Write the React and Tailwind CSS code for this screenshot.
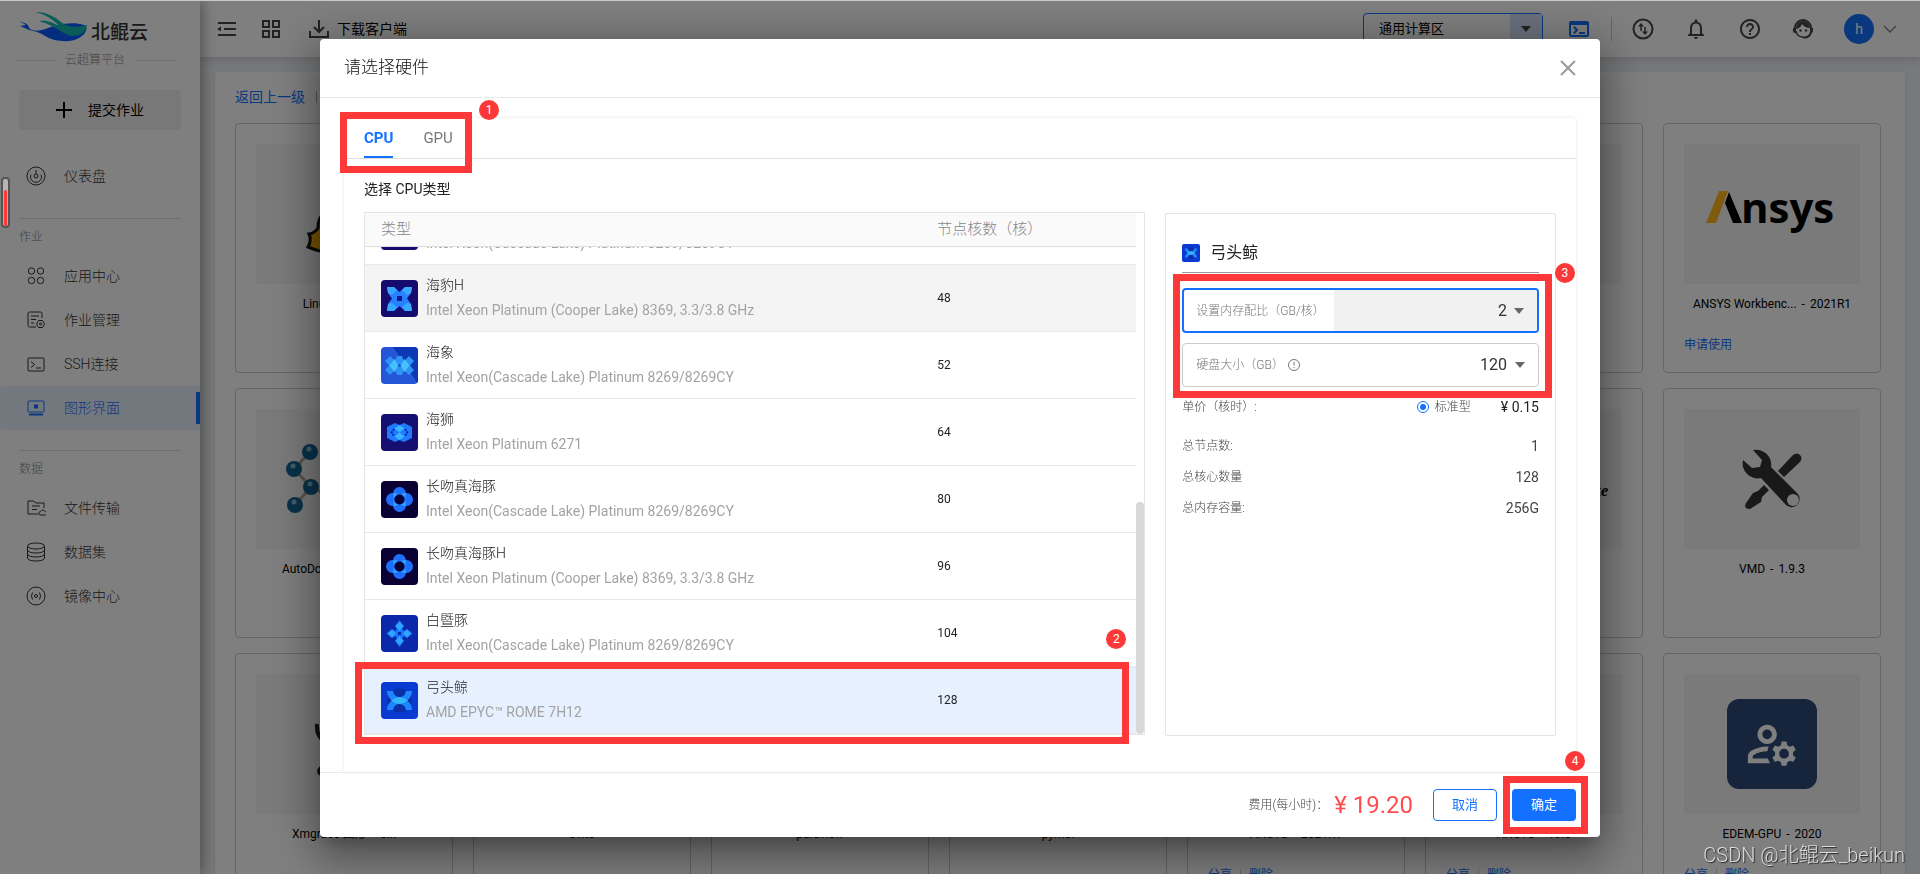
import { useEffect, useRef, useState } from "react";
import {
    MdHelpOutline,
    MdNotificationsNone,
    MdOutlineGridView,
    MdOutlineManageAccounts,
    MdOutlineTerminal,
} from "react-icons/md";

// 节点图标，按 kind 绘制不同图案
function NodeIcon({ kind, className }) {
    const shapes = {
        seal: (
            <>
                <rect width="37" height="37" fill="#150a6e" />
                <path d="M6 7h7l5.500 5L24 7h7l-1 6-4 5.500 4 5.500 1 7h-7l-5.500-5-5.500 5H6l1-7 4-5.500L7 13z" fill="#2680ff" />
                <path d="M6 7h7l3 3-5 5-4-2zM31 7h-7l-3 3 5 5 4-2zM6 31h7l3-4-5-4-4 1zM31 31h-7l-3-4 5-4 4 1z" fill="#38a8ff" />
                <rect x="16" y="16" width="5" height="5" fill="#101a8c" />
            </>
        ),
        walrus: (
            <>
                <rect width="37" height="37" fill="#2456d8" />
                <path d="M37 0v37L12 0z" fill="#0d38b4" />
                <path d="M4 14l5-5 5 5 2-5h5l2 5 5-5 5 5-4 4.500 4 4.500-5 5-5-5-2 5h-5l-2-5-5 5-5-5 4-4.500z" fill="#2f93f5" />
                <path d="M13.500 12l4 6.500-4 6.500-5-6.500zM23.500 12l5 6.500-5 6.500-4-6.500z" fill="#43c2ff" />
                <circle cx="18.500" cy="18.500" r="1.500" fill="#1755cf" />
            </>
        ),
        lion: (
            <>
                <rect width="37" height="37" fill="#140f70" />
                <path d="M6 13l8-4 4.500 2L23 9l8 4v11l-8 4-4.500-2-4.500 2-8-4z" fill="#1f7aff" />
                <path d="M18.500 11l5 3.500-5 4-5-4zM18.500 18.500l5 4-5 3.500-5-3.500z" fill="#38b6ff" />
                <path d="M13 15l-2.500 3.500L13 22M24 15l2.500 3.500L24 22" fill="none" stroke="#140f70" strokeWidth="1.500" strokeDasharray="2 1" />
            </>
        ),
        dolphin: (
            <>
                <rect width="37" height="37" fill="#0a0033" />
                <g fill="#1f6fff">
                    <circle cx="18.500" cy="12.500" r="6.500" />
                    <circle cx="18.500" cy="24.500" r="6.500" />
                    <circle cx="11.500" cy="18.500" r="6.500" />
                    <circle cx="25.500" cy="18.500" r="6.500" />
                </g>
                <path d="M12 12.500q3-1.500 5 1.500-4 0-4 4.500zM25 12.500q-3-1.500-5 1.500 4 0 4 4.500zM12 24.500q3 1.500 5-1.500-4 0-4-4.500zM25 24.500q-3 1.500-5-1.500 4 0 4-4.500z" fill="#2fa4ff" />
                <circle cx="18.500" cy="18.500" r="5" fill="#0a0033" />
            </>
        ),
        baiji: (
            <>
                <rect width="37" height="37" fill="#0b28a8" />
                <path d="M18.500 5l4.500 6-2 3 2 2 3-2 5.500 4.500-5.500 4.500-3-2-2 2 2 3-4.500 6-4.500-6 2-3-2-2-3 2L5.500 18.500 11 14l3 2 2-2-2-3z" fill="#1a74ff" />
                <path d="M18.500 7l4 4-4 5-4-5zM18.500 21l4 5-4 4-4-4zM7 18.500l4-4 4 4-4 4zM22 18.500l4-4 4 4-4 4z" fill="#2da6ff" />
                <rect x="17" y="17" width="3" height="3" fill="#0b28a8" />
            </>
        ),
        whale: (
            <>
                <rect width="37" height="37" fill="#0a3ad2" />
                <circle cx="18.500" cy="18.500" r="12" fill="#0b2fa6" />
                <path d="M6 9h6q1 6 6.500 6T25 9h6q0 6-5 9.500 5 3.500 5 9.500h-6q-1-6-6.500-6T12 28H6q0-6 5-9.500Q6 15 6 9z" fill="#1f86ff" />
                <path d="M10 18.500q8.500-7 17 0-8.500 7-17 0z" fill="#2fb8ff" />
            </>
        ),
    };

    return (
        <svg viewBox="0 0 37 37" className={className} aria-hidden="true">
            {shapes[kind]}
        </svg>
    );
}

// 侧边栏图标
const menuIcons = {
    dashboard: (
        <>
            <circle cx="10" cy="10" r="9" />
            <path d="M10 4v4M5 8.500a5.500 5.500 0 1 0 10 0" />
            <circle cx="10" cy="10" r="2" />
        </>
    ),
    apps: (
        <>
            <circle cx="5.500" cy="5" r="3.200" />
            <circle cx="14.500" cy="5" r="3.200" />
            <circle cx="5.500" cy="14.500" r="3.200" />
            <circle cx="14.500" cy="14.500" r="3.200" />
        </>
    ),
    jobs: (
        <>
            <path d="M10 17H3.500A1.500 1.500 0 0 1 2 15.500v-12A1.500 1.500 0 0 1 3.500 2h11A1.500 1.500 0 0 1 16 3.500V8M5 6h8M5 9.500h5M5 13h3" />
            <path d="M12.500 10.500h4l2 3.500-2 3.500h-4l-2-3.500z" />
            <circle cx="14.500" cy="14" r="1" />
        </>
    ),
    ssh: (
        <>
            <rect x="2" y="4" width="16" height="13" rx="1" />
            <path d="M5 7.500l3.500 3L5 13.500M10 14h5" />
        </>
    ),
    desktop: (
        <>
            <rect x="2" y="3" width="16" height="11" rx="1" />
            <rect x="8.500" y="7" width="3" height="3" fill="currentColor" />
            <path d="M3 16.500h14" strokeWidth="2" />
        </>
    ),
    transfer: (
        <>
            <path d="M12 16H2V3h6l1.500 2H18v5M6 8h8M6 11.500h5" />
            <path d="M14 17h5.500a1.800 1.800 0 0 0-.5-3.500 2.500 2.500 0 0 0-4.500 0A1.800 1.800 0 0 0 14 17z" />
        </>
    ),
    dataset: (
        <>
            <ellipse cx="10" cy="4" rx="8.500" ry="3" />
            <path d="M1.500 4v12c0 4 17 4 17 0V4M1.500 8c0 4 17 4 17 0M1.500 12c0 4 17 4 17 0" />
        </>
    ),
    mirror: (
        <>
            <circle cx="10" cy="10" r="9" />
            <circle cx="10" cy="10" r="1.500" />
            <path d="M6.500 6.500q-2 3.500 0 7M13.500 6.500q2 3.500 0 7" />
        </>
    ),
};

function MenuItem({ icon, label, active }) {
    return (
        <a
            href="#"
            className={
                active
                    ? "flex h-11 items-center gap-[18px] rounded-l bg-[#e6f0fc] pl-[26px] text-sm text-[#1470ff]"
                    : "flex h-11 items-center gap-[18px] pl-[26px] text-sm text-[#333]"
            }
        >
            <svg viewBox="0 0 20 20" className="size-5 shrink-0" fill="none" stroke="currentColor" strokeWidth="1">
                {menuIcons[icon]}
            </svg>
            <span className="flex-1 font-light">{label}</span>
            {active && <span className="h-8 w-1 bg-[#1470ff]" />}
        </a>
    );
}

function MenuTitle({ children }) {
    return (
        <h3 className="mx-[19px] mt-5 flex h-9 items-center border-t border-[#dcdcdc] text-xs font-light text-[#888]">
            {children}
        </h3>
    );
}

function Sidebar() {
    return (
        <aside className="z-20 w-[200px] shrink-0 bg-white shadow-[2px_0_14px_rgba(0,0,0,0.4)]">
            <div className="flex h-[46px] items-end gap-1 pb-1 pl-[19px]">
                <svg viewBox="0 0 68 30" className="h-[30px] w-[68px]" aria-hidden="true">
                    <path d="M0 9l8 3 3 5c8 4 14 0 24-3s22-4 30-1c5 2 2 9-5 13-9 5-24 4-34-2C17 18 11 19 8 17L1 14l6-1z" fill="#0a5bff" />
                    <path d="M16 0c12 0 20 5 26 10s14 6 26 3c-1 8-8 11-15 11-9-1-13-9-33-15 9-1 14 2 20 5C35 8 28 3 16 0z" fill="#12b8b0" />
                </svg>
                <span className="text-[19px] leading-[18px] font-medium text-[#333]">北鲲云</span>
            </div>
            <div className="mx-[15px] mt-[5px] flex h-[18px] w-40 items-center gap-2.5 text-xs font-light text-[#888]">
                <span className="h-px flex-1 bg-[#e0e0e0]" />
                云超算平台
                <span className="h-px flex-1 bg-[#e0e0e0]" />
            </div>
            <button
                type="button"
                className="mx-[19px] mt-[21px] mb-6 flex h-10 w-[162px] items-center justify-center gap-4 rounded bg-[#f0f0f0] text-sm text-black"
            >
                <svg viewBox="0 0 16 16" className="size-4" stroke="currentColor" strokeWidth="2">
                    <path d="M8 0v16M0 8h16" />
                </svg>
                提交作业
            </button>
            <nav>
                <MenuItem icon="dashboard" label="仪表盘" />
                <MenuTitle>作业</MenuTitle>
                <MenuItem icon="apps" label="应用中心" />
                <MenuItem icon="jobs" label="作业管理" />
                <MenuItem icon="ssh" label="SSH连接" />
                <MenuItem icon="desktop" label="图形界面" active />
                <MenuTitle>数据</MenuTitle>
                <MenuItem icon="transfer" label="文件传输" />
                <MenuItem icon="dataset" label="数据集" />
                <MenuItem icon="mirror" label="镜像中心" />
            </nav>
        </aside>
    );
}

function Header() {
    return (
        <header className="z-10 flex h-[57px] shrink-0 items-center bg-white pr-6 pl-[17px] text-[#444] shadow-[0_2px_10px_rgba(0,0,0,0.15)]">
            <button type="button" aria-label="收起菜单">
                <svg viewBox="0 0 20 16" className="h-4 w-5" fill="none" stroke="currentColor" strokeWidth="2">
                    <path d="M1 2h18M7 8h12M1 14h18" />
                    <path d="M0 8l4-2.500v5z" fill="currentColor" stroke="none" />
                </svg>
            </button>
            <button type="button" aria-label="应用" className="ml-[22px]">
                <MdOutlineGridView size={24} />
            </button>
            <a href="#" className="ml-[26px] flex items-center gap-2 text-sm text-black">
                <svg viewBox="0 0 20 18" className="h-[18px] w-5" fill="none" stroke="#444" strokeWidth="2">
                    <path d="M1 11v6h18v-6M10 0v11M5 7l5 5 5-5" />
                </svg>
                下载客户端
            </a>
            <div className="relative ml-auto">
                <select
                    aria-label="计算区"
                    className="h-8 w-[180px] appearance-none rounded border border-[#1470ff] bg-white pl-[15px] text-[13px] text-black"
                >
                    <option>通用计算区</option>
                </select>
                <span className="pointer-events-none absolute inset-y-px right-px flex w-8 items-center justify-center bg-[#d5e3fa]">
                    <svg viewBox="0 0 10 6" className="h-1.5 w-2.5" fill="#444">
                        <path d="M0 0h10L5 6z" />
                    </svg>
                </span>
            </div>
            <button type="button" aria-label="终端" className="ml-6 border-r border-[#ccc] pr-5 text-[#1470ff]">
                <MdOutlineTerminal size={24} />
            </button>
            <button type="button" aria-label="流量" className="ml-5">
                <svg viewBox="0 0 22 22" className="size-[22px]" fill="none" stroke="currentColor" strokeWidth="2">
                    <circle cx="11" cy="11" r="9.500" />
                    <path d="M9 13V7M13 9v6" strokeWidth="1.500" />
                    <path d="M6 8.500L9 5l3 3.500zM10 13.500l3 3.500 3-3.500z" fill="currentColor" stroke="none" />
                </svg>
            </button>
            <button type="button" aria-label="通知" className="ml-[30px]">
                <MdNotificationsNone size={24} />
            </button>
            <button type="button" aria-label="帮助" className="ml-[30px]">
                <MdHelpOutline size={24} />
            </button>
            <button type="button" aria-label="客服" className="ml-[30px]">
                <svg viewBox="0 0 22 22" className="size-[22px]" fill="none" stroke="currentColor" strokeWidth="2">
                    <path d="M3 10a8 8 0 0 1 16 0v4q-1 5-6 5.500h-2" />
                    <path d="M4 13q1 6 7 6" strokeWidth="1.500" />
                    <path d="M4 11q5-1 6-5 3 4 8 4-1-7-7-7t-7 8zM1 10h3v5H3q-2 0-2-2zM18 10h3v3q0 2-2 2h-1z" fill="currentColor" stroke="none" />
                    <circle cx="8.500" cy="12.500" r="1.200" fill="currentColor" stroke="none" />
                    <circle cx="14" cy="12.500" r="1.200" fill="currentColor" stroke="none" />
                </svg>
            </button>
            <button type="button" className="ml-[30px] flex items-center gap-2.5">
                <span className="flex size-[30px] items-center justify-center rounded-full bg-[#1470ff] text-sm text-white">h</span>
                <svg viewBox="0 0 12 8" className="h-2 w-3" fill="none" stroke="#888" strokeWidth="1.500">
                    <path d="M0 1l6 6 6-6" />
                </svg>
            </button>
        </header>
    );
}

// 应用卡片上的图片
const artwork = {
    linux: (
        <>
            <path d="M72 20q16-14 32 0l6 40q16 30 4 50H70q-8-20 0-48z" fill="#222" />
            <path d="M66 72q-4 2-4 12-3 5-9 6 3 6-1 13 12 5 24 6 4-16-10-37z" fill="#f0a800" stroke="#111" strokeWidth="3" />
        </>
    ),
    autodock: (
        <>
            <path d="M54 43L38 60l17 18-16 18M55 78l20 10" fill="none" stroke="#b5a595" strokeWidth="3" />
            <circle cx="54" cy="43" r="8" fill="#0f6592" />
            <circle cx="38" cy="60" r="8" fill="#0f6592" />
            <circle cx="55" cy="78" r="8" fill="#0f6592" />
            <circle cx="39" cy="96" r="8" fill="#0f6592" />
            <g fill="#8fb9cf">
                <circle cx="53" cy="40" r="2.500" />
                <circle cx="37" cy="57" r="2.500" />
                <circle cx="54" cy="75" r="2.500" />
                <circle cx="38" cy="93" r="2.500" />
            </g>
        </>
    ),
    xmgrace: <path d="M61 50q-1 12 8 18l24 12-22 10-6 4q-4 4 0 6l50-34" fill="none" stroke="#222" strokeWidth="4" />,
    amorphous: (
        <text x="150" y="87" fontSize="17" fontWeight="700" fontStyle="italic" fontFamily="Liberation Serif, serif">
            te
        </text>
    ),
    ansys: (
        <>
            <path d="M22 79l13-32h9L32 79z" fill="#ffb71b" />
            <path d="M45 48l13 31h-9l-8-20z" />
            <text x="57" y="79" fontSize="42" fontWeight="700" fontFamily="Open Sans, sans-serif">
                nsys
            </text>
        </>
    ),
    vmd: (
        <g transform="translate(58 40)" fill="#333">
            <path d="M11 1a15 15 0 0 1 18 17l26 26a8 8 0 1 1-11 12L19 29A15 15 0 0 1 1 11l9 8 8-1 2-7z" />
            <circle cx="51" cy="51" r="6" fill="#f5f5f5" />
            <path d="M36 22L51 6q4-3 7 0t0 7L42 28zM22 36l5 5-7 7-1 5-11 7q-7 0-4-6l7-10 5-2z" />
        </g>
    ),
};

const apps = [
    { name: "Linux终端", version: "1.0", art: "linux" },
    {},
    {},
    {},
    {},
    { name: "ANSYS Fluent", version: "2021R1" },
    { name: "ANSYS Workbenc...", version: "2021R1", art: "ansys", apply: true },
    { name: "AutoDock Tools", version: "1.5.6", art: "autodock" },
    {},
    {},
    {},
    {},
    { name: "Amorphous Suite", version: "1...", art: "amorphous" },
    { name: "VMD", version: "1.9.3", art: "vmd" },
    { name: "Xmgrace 图形", version: "5.x", art: "xmgrace" },
    { name: "ovito" },
    { name: "paraview" },
    { name: "pymol" },
    { name: "ANSYS", version: "2021R1", share: true },
    { name: "ANSYS", version: "19.0", share: true },
    { name: "EDEM-GPU", version: "2020", art: "edem", share: true },
];

function AppCard({ app }) {
    return (
        <div className="h-[250px] rounded border border-[#ccc] p-5">
            <div className="flex h-[140px] items-center justify-center bg-[#f5f5f5]">
                {app.art === "edem" ? (
                    <span className="flex size-[90px] items-center justify-center rounded-xl bg-[#2e4a78] text-white">
                        <MdOutlineManageAccounts size={58} />
                    </span>
                ) : (
                    <svg viewBox="0 0 176 140" className="h-[140px] w-44">
                        {artwork[app.art]}
                    </svg>
                )}
            </div>
            <p className="mt-2.5 flex h-5 justify-center gap-[5px] text-xs leading-5 whitespace-nowrap text-black">
                <span>{app.name}</span>
                {app.version && (
                    <>
                        <span>-</span>
                        <span>{app.version}</span>
                    </>
                )}
            </p>
            <div className="mt-[21px] flex h-5 items-center gap-2 text-xs text-[#1470ff]">
                {app.apply && <a href="#">申请使用</a>}
                {app.share && (
                    <>
                        <a href="#">分享</a>
                        <span className="h-3 w-px bg-[#ccc]" />
                        <a href="#">删除</a>
                    </>
                )}
            </div>
        </div>
    );
}

const nodes = [
    { name: "海豹", cpu: "Intel Xeon(Cascade Lake) Platinum 8269, 8269CY", cores: "", icon: "seal" },
    { name: "海豹H", cpu: "Intel Xeon Platinum (Cooper Lake) 8369, 3.3/3.8 GHz", cores: 48, icon: "seal" },
    { name: "海象", cpu: "Intel Xeon(Cascade Lake) Platinum 8269/8269CY", cores: 52, icon: "walrus" },
    { name: "海狮", cpu: "Intel Xeon Platinum 6271", cores: 64, icon: "lion" },
    { name: "长吻真海豚", cpu: "Intel Xeon(Cascade Lake) Platinum 8269/8269CY", cores: 80, icon: "dolphin" },
    { name: "长吻真海豚H", cpu: "Intel Xeon Platinum (Cooper Lake) 8369, 3.3/3.8 GHz", cores: 96, icon: "dolphin" },
    { name: "白暨豚", cpu: "Intel Xeon(Cascade Lake) Platinum 8269/8269CY", cores: 104, icon: "baiji" },
    { name: "弓头鲸", cpu: "AMD EPYC™ ROME 7H12", cores: 128, icon: "whale" },
];

function NodeTable({ selected, onSelect }) {
    const scroller = useRef(null);

    // 打开时滚动到选中的节点
    useEffect(() => {
        scroller.current.scrollTop = scroller.current.scrollHeight;
    }, []);

    return (
        <div className="relative h-[523px] border border-[#e5e5e5]">
            <div ref={scroller} className="h-full overflow-y-auto pr-2 [scrollbar-width:none]">
                <table className="w-full table-fixed border-separate border-spacing-0 text-left">
                    <thead className="sticky top-0 z-10 bg-[#fafafa] text-[15px] text-[#888]">
                        <tr className="h-[34px]">
                            <th className="w-[72%] border-b border-[#dedede] pl-4 font-light">类型</th>
                            <th className="border-b border-[#dedede] pl-[17px] font-light">节点核数（核）</th>
                        </tr>
                    </thead>
                    <tbody>
                        {nodes.map((node) => (
                            <tr
                                key={node.name}
                                onClick={() => onSelect(node.name)}
                                className={
                                    node.name === selected
                                        ? "h-[67px] bg-[#e6f0ff]"
                                        : node.name === "海豹H"
                                          ? "h-[67px] bg-[#f4f4f4]"
                                          : "h-[67px]"
                                }
                            >
                                <td className="border-b border-[#e8e8e8] pl-4">
                                    <div className="flex items-center gap-2">
                                        <NodeIcon kind={node.icon} className="size-[37px] rounded" />
                                        <div className="text-sm leading-[25px]">
                                            <p className="font-light text-[#222]">{node.name}</p>
                                            <p className="text-[#a3a3a3]">{node.cpu}</p>
                                        </div>
                                    </div>
                                </td>
                                <td className="border-b border-[#e8e8e8] pl-[17px] text-xs text-[#222]">{node.cores}</td>
                            </tr>
                        ))}
                    </tbody>
                </table>
            </div>
            <span className="absolute right-0 bottom-0 h-[232px] w-2 rounded-full bg-[#d8d8d8]" />
        </div>
    );
}

function Caret() {
    return (
        <svg viewBox="0 0 10 6" className="pointer-events-none absolute right-[13px] h-1.5 w-2.5" fill="#666">
            <path d="M0 0h10L5 6z" />
        </svg>
    );
}

function SummaryRow({ label, value }) {
    return (
        <div className="flex h-[31px] items-center justify-between">
            <dt className="text-xs font-light text-[#444]">{label}</dt>
            <dd className="text-sm text-[#444]">{value}</dd>
        </div>
    );
}

function NodeDetail({ name }) {
    return (
        <section className="relative mt-px h-[523px] rounded-xs border border-[#e5e5e5] px-4 pt-5">
            <h3 className="flex h-[39px] items-center gap-2.5 border-b border-[#999] text-base text-[#222]">
                <NodeIcon kind="whale" className="size-[18px] rounded-xs" />
                {name}
            </h3>

            {/* 内存与硬盘配置 */}
            <div className="relative mt-[15px] flex h-[45px] items-center overflow-hidden rounded border-2 border-[#1470ff]">
                <label htmlFor="memory" className="w-[150px] pl-3 text-xs font-light whitespace-nowrap text-[#777]">
                    设置内存配比（GB/核）
                </label>
                <select id="memory" className="h-full flex-1 appearance-none bg-[#f1f1f1] pr-[30px] text-base text-[#333] [text-align-last:right]">
                    <option>2</option>
                </select>
                <Caret />
            </div>
            <div className="relative mt-2.5 flex h-11 items-center rounded border border-[#ccc]">
                <label htmlFor="disk" className="flex items-center gap-1 pl-[13px] text-xs font-light whitespace-nowrap text-[#777]">
                    硬盘大小（GB）
                    <svg viewBox="0 0 12 12" className="size-3" fill="none" stroke="currentColor">
                        <circle cx="6" cy="6" r="5.500" />
                        <path d="M6 3v3.500M6 8v1" />
                    </svg>
                </label>
                <select id="disk" className="h-full flex-1 appearance-none bg-transparent pr-[31px] text-base text-[#333] [text-align-last:right]">
                    <option>120</option>
                </select>
                <Caret />
            </div>

            <div className="mt-2 mb-[11px] flex h-6 items-center text-xs font-light text-[#444]">
                <span className="flex-1">单价（核时）:</span>
                <input id="standard" type="radio" defaultChecked className="size-3 appearance-none rounded-full border border-[#1470ff] bg-[#1470ff] bg-clip-content p-0.5" />
                <label htmlFor="standard" className="ml-1.5">
                    标准型
                </label>
                <span className="ml-[30px] text-sm font-normal text-[#222]">¥ 0.15</span>
            </div>
            <dl>
                <SummaryRow label="总节点数:" value="1" />
                <SummaryRow label="总核心数量" value="128" />
                <SummaryRow label="总内存容量:" value="256G" />
            </dl>

            <span className="pointer-events-none absolute top-[60px] right-[3px] h-[124px] w-[379px] border-[7px] border-[#fc3838]" />
            <Step className="absolute top-[49px] -right-5">3</Step>
        </section>
    );
}

// 红色步骤序号
function Step({ className, children }) {
    return (
        <span className={className}>
            <span className="flex size-5 items-center justify-center rounded-full bg-[#fc3838] text-xs text-white">{children}</span>
        </span>
    );
}

function HardwareDialog() {
    const [tab, setTab] = useState("CPU");
    const [selected, setSelected] = useState("弓头鲸");

    return (
        <div className="fixed inset-0 z-50 flex items-center justify-center bg-black/50 pt-0.5">
            <div
                role="dialog"
                aria-labelledby="dialog-title"
                className="w-full max-w-[1280px] rounded bg-white shadow-[0_11px_15px_-7px_rgba(0,0,0,0.2),0_24px_38px_3px_rgba(0,0,0,0.14),0_9px_46px_8px_rgba(0,0,0,0.3)]"
            >
                <div className="flex h-[59px] items-center justify-between border-b border-[#eaeaea] px-6">
                    <h2 id="dialog-title" className="text-[17px] font-light text-[#111]">
                        请选择硬件
                    </h2>
                    <button type="button" aria-label="关闭">
                        <svg viewBox="0 0 16 16" className="size-4" fill="none" stroke="#999" strokeWidth="2">
                            <path d="M1 1l14 14M15 1L1 15" />
                        </svg>
                    </button>
                </div>

                <div className="px-6 pt-5">
                    <div className="rounded pb-9 shadow-[0_0_3px_rgba(0,0,0,0.12)]">
                        <div role="tablist" className="relative flex h-[41px] gap-[30px] border-b border-[#dedede] px-5 text-[15px]">
                            {["CPU", "GPU"].map((name) => (
                                <button
                                    key={name}
                                    type="button"
                                    role="tab"
                                    aria-selected={tab === name}
                                    onClick={() => setTab(name)}
                                    className={
                                        tab === name
                                            ? "border-b-2 border-[#1470ff] pt-0.5 font-bold text-[#1470ff]"
                                            : "border-b-2 border-transparent pt-0.5 text-[#777]"
                                    }
                                >
                                    {name}
                                </button>
                            ))}
                            <span className="pointer-events-none absolute -top-1.5 -left-1 h-[61px] w-[132px] border-[7px] border-[#fc3838]" />
                            <Step className="absolute -top-[18px] left-[135px]">1</Step>
                        </div>

                        <div className="px-5">
                            <h3 className="flex h-[53px] items-center pt-1.5 text-sm text-[#222]">选择 {tab}类型</h3>
                            <div className="grid grid-cols-[2fr_1fr] gap-5">
                                <div className="relative">
                                    <NodeTable selected={selected} onSelect={setSelected} />
                                    <span className="pointer-events-none absolute right-4 -bottom-2 -left-[9px] h-[82px] border-[7px] border-[#fc3838]" />
                                    <Step className="absolute right-[19px] bottom-[87px]">2</Step>
                                </div>
                                <NodeDetail name={selected} />
                            </div>
                        </div>
                    </div>
                </div>

                <div className="flex h-[65px] items-center justify-end border-t border-[#eaeaea] px-6">
                    <span className="mr-1.5 text-xs font-light text-[#444]">费用(每小时)：</span>
                    <span className="text-2xl text-[#ff4d4f]">¥ 19.20</span>
                    <button type="button" className="ml-5 h-8 w-16 rounded border border-[#1470ff] text-[13px] text-[#1470ff]">
                        取消
                    </button>
                    <div className="relative ml-[15px]">
                        <button type="button" className="block h-8 w-16 rounded bg-[#1470ff] text-[13px] text-white">
                            确定
                        </button>
                        <span className="pointer-events-none absolute -inset-y-[13px] -right-3 -left-[9px] border-[7px] border-[#fc3838]" />
                        <Step className="absolute -top-[38px] -right-[9px]">4</Step>
                    </div>
                </div>
            </div>
        </div>
    );
}

export default function App() {
    return (
        <div className="flex h-screen overflow-hidden bg-[#f0f2f5] font-[Roboto,'Noto_Sans_CJK_SC',sans-serif]">
            <Sidebar />
            <div className="flex min-w-0 flex-1 flex-col">
                <Header />
                <main className="mx-[15px] mt-[15px] rounded bg-white pt-4 pr-6 pl-5 shadow-sm">
                    <div className="mb-[17px] flex h-[18px] items-center gap-[11px] text-sm">
                        <a href="#" className="text-[#1470ff]">
                            返回上一级
                        </a>
                        <span className="h-3 w-px bg-[#aaa]" />
                    </div>
                    <div className="grid grid-cols-7 gap-x-5 gap-y-[15px]">
                        {apps.map((app, index) => (
                            <AppCard key={index} app={app} />
                        ))}
                    </div>
                </main>
            </div>

            <HardwareDialog />

            {/* 浏览器顶部细线、左侧音量条和水印 */}
            <div className="fixed inset-x-0 top-0 z-60 h-px bg-[#c8c8c8]" />
            <div className="fixed top-[177px] left-px z-60 flex h-[51px] w-[9px] items-end justify-center rounded border-2 border-[#555] bg-[#b5b5b5]">
                <span className="h-9 w-[3px] rounded-full bg-[#fc3838]" />
            </div>
            <p className="fixed right-[15px] bottom-1 z-60 text-xl leading-[30px] font-light text-white/75 [text-shadow:1px_1px_1px_rgba(0,0,0,0.7)]">
                CSDN @北鲲云_beikun
            </p>
        </div>
    );
}
